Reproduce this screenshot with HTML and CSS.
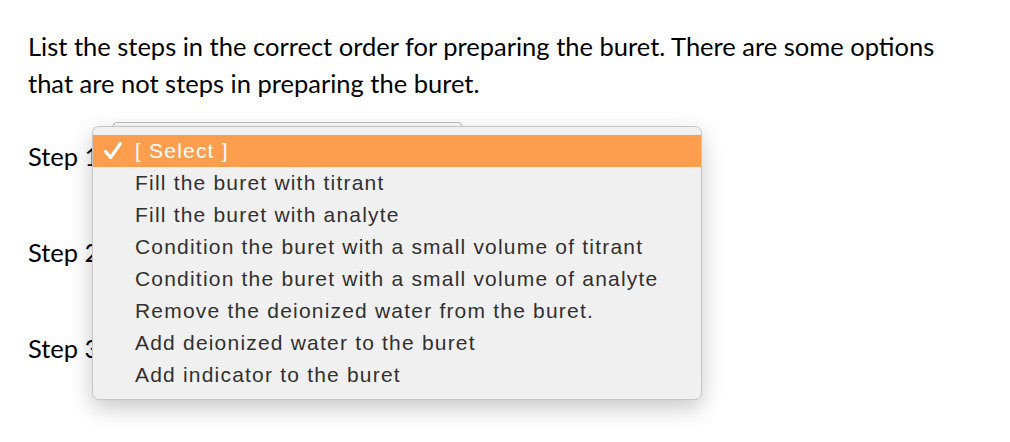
FILE: index.html
```html
<!DOCTYPE html>
<html lang="en">

<head>
    <meta charset="UTF-8">
    <title>Buret steps</title>
    <link rel="stylesheet" href="styles.css">
</head>

<body>

    <div class="question">

        <p class="prompt">List the steps in the correct order for preparing the buret. There are some options
            that are not steps in preparing the buret.</p>

        <div class="steps">
            <div class="step">
                <span class="label">Step 1</span>
                <div class="picker"></div>
            </div>
            <div class="step">
                <span class="label">Step 2</span>
                <div class="picker"></div>
            </div>
            <div class="step">
                <span class="label">Step 3</span>
                <div class="picker"></div>
            </div>
        </div>

    </div>

    <!-- open dropdown for step 1 -->
    <ul class="menu">
        <li class="on">
            <svg class="tick" width="20" height="20" viewBox="0 0 20 20">
                <path d="M2.5 10.5 L7.5 16.5 L17.5 2.5" fill="none" stroke="#fff" stroke-width="3.2"
                    stroke-linecap="round" stroke-linejoin="round" />
            </svg>
            [ Select ]
        </li>
        <li>Fill the buret with titrant</li>
        <li>Fill the buret with analyte</li>
        <li>Condition the buret with a small volume of titrant</li>
        <li>Condition the buret with a small volume of analyte</li>
        <li>Remove the deionized water from the buret.</li>
        <li>Add deionized water to the buret</li>
        <li>Add indicator to the buret</li>
    </ul>

</body>

</html>
```

FILE: styles.css
```css
* {
    box-sizing: border-box;
}

html,
body {
    margin: 0;
    background-color: #fff;
    color: #000;
    font-family: "Lato", "Liberation Sans", sans-serif;
}

.question {
    padding: 28px 28px 0 28px;
}

.prompt {
    margin: 0;
    font-size: 25.5px;
    line-height: 37px;
    max-width: 925px;
}

.steps {
    margin-top: 20px;
}

.step {
    display: flex;
    align-items: flex-start;
    height: 96px;
    font-size: 25.5px;
    line-height: 36px;
}

.step .label {
    width: 84px;
    margin-top: 16px;
}

.picker {
    width: 351px;
    height: 40px;
    border: 1px solid #bdbdbd;
    border-radius: 5px;
    background: linear-gradient(#fcfcfc, #ececec);
}

.menu {
    position: absolute;
    left: 92px;
    top: 126px;
    width: 610px;
    margin: 0;
    padding: 8px 0;
    list-style: none;
    background-color: #f0f0f0;
    border: 1px solid #c6c6c6;
    border-radius: 7px;
    box-shadow: 0 8px 22px rgba(0, 0, 0, 0.22);
    font-family: "Liberation Sans", "Arial", sans-serif;
    font-size: 21px;
    letter-spacing: 1.2px;
    color: #303030;
}

.menu li {
    height: 32px;
    line-height: 32px;
    padding-left: 42px;
    position: relative;
}

.menu li.on {
    background-color: #fd9e4f;
    color: #fff;
}

.tick {
    position: absolute;
    left: 10px;
    top: 6px;
}
```
